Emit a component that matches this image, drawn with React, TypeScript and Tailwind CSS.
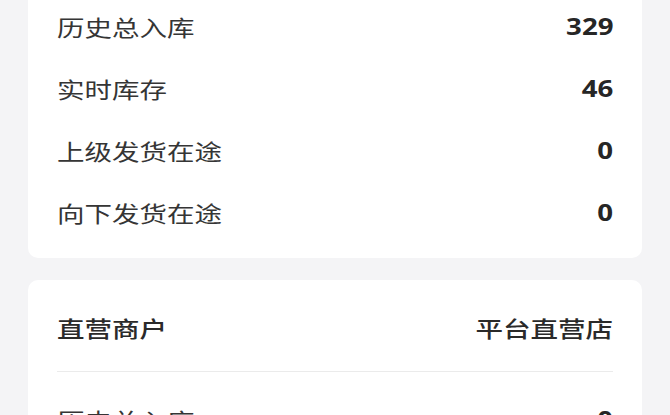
const stockRows = [
  { label: "历史总入库", value: "329" },
  { label: "实时库存", value: "46" },
  { label: "上级发货在途", value: "0" },
  { label: "向下发货在途", value: "0" },
];

const Row = ({ label, value }: { label: string; value: string }) => (
  <div className="flex h-[62px] items-center justify-between">
    <span className="inline-block origin-left scale-x-[1.25] text-[22px] text-[#353535]">{label}</span>
    <span className="inline-block origin-right scale-x-[1.2] font-['Open_Sans',sans-serif] text-[23px] font-bold text-[#262626]">
      {value}
    </span>
  </div>
);

export default function App() {
  return (
    <div className="h-[415px] overflow-hidden bg-[#f4f4f6] px-[28px] font-['Noto_Sans_CJK_SC',sans-serif]">
      <div className="-mt-[21px] rounded-[10px] bg-white px-[29px] pb-[15px] pt-[16px]">
        {stockRows.map((row) => (
          <Row key={row.label} label={row.label} value={row.value} />
        ))}
      </div>

      <div className="mt-[22px] rounded-[10px] bg-white px-[29px]">
        <div className="flex h-[92px] items-center justify-between border-b border-[#ebebeb] pt-1">
          <span className="inline-block origin-left scale-x-[1.25] text-[22px] font-medium text-[#2a2a2a]">直营商户</span>
          <span className="inline-block origin-right scale-x-[1.25] text-[22px] font-medium text-[#2a2a2a]">平台直营店</span>
        </div>
        <div className="mt-[16px]">
          <Row label="历史总入库" value="0" />
        </div>
      </div>
    </div>
  );
}
